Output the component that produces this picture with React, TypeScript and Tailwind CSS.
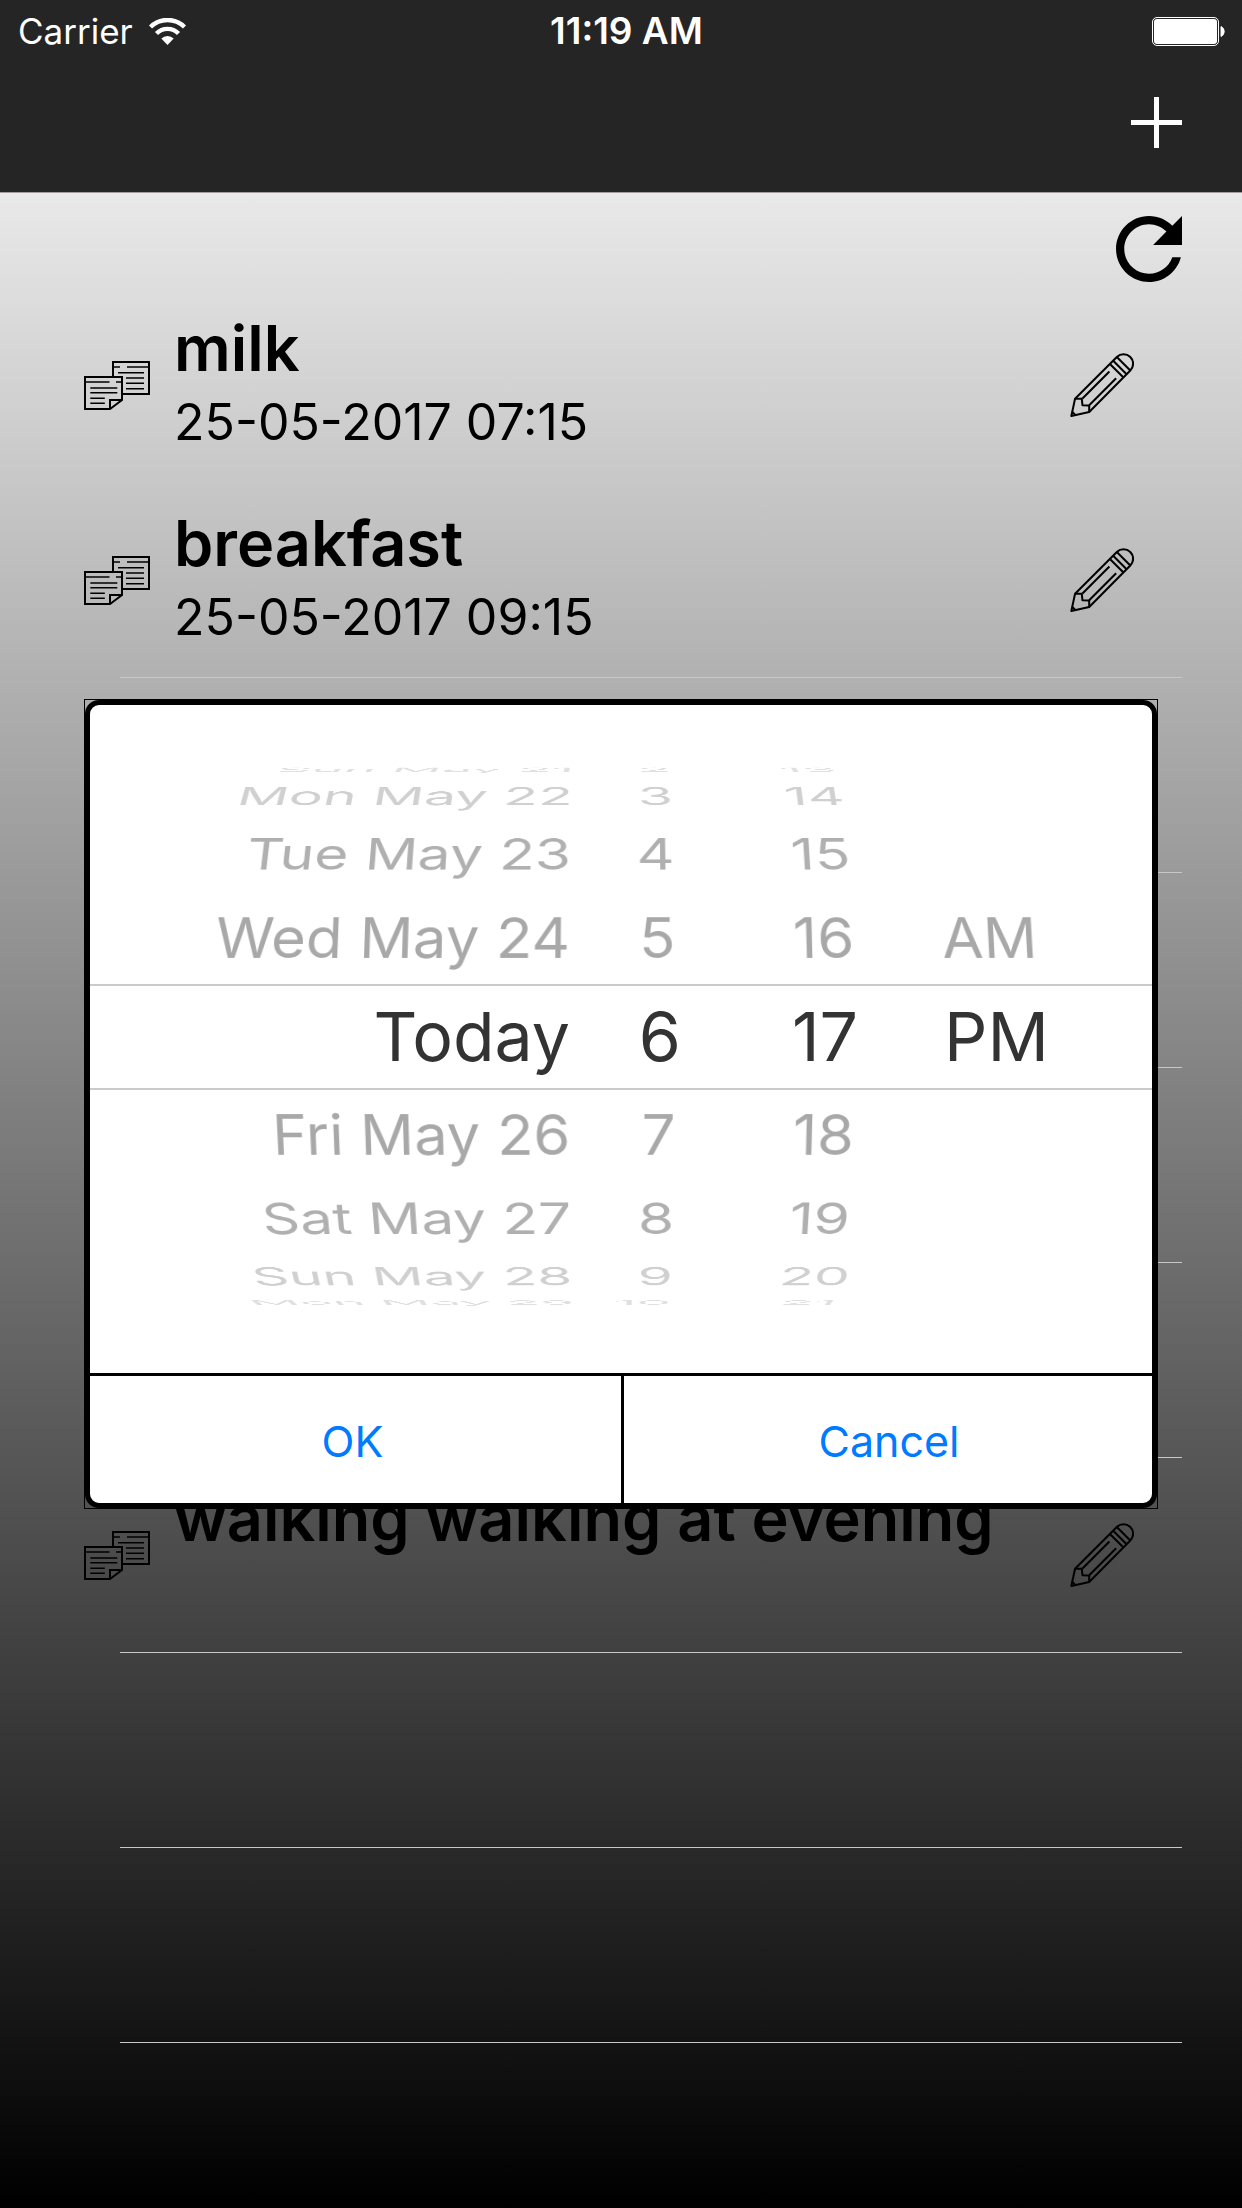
import type { CSSProperties } from "react";

type Reminder = { title: string; date?: string };

const reminders: (Reminder | null)[] = [
  { title: "milk", date: "25-05-2017 07:15" },
  { title: "breakfast", date: "25-05-2017 09:15" },
  null,
  null,
  null,
  null,
  { title: "walking walking at evening" },
  null,
  null,
];

type Wheel = {
  label: string;
  values: string[];
  selected: number;
  list: string;
  item: string;
};

const wheels: Wheel[] = [
  {
    label: "Date",
    values: [
      "Sun May 21",
      "Mon May 22",
      "Tue May 23",
      "Wed May 24",
      "Today",
      "Fri May 26",
      "Sat May 27",
      "Sun May 28",
      "Mon May 29",
    ],
    selected: 4,
    list: "justify-items-end",
    item: "text-right",
  },
  {
    label: "Hour",
    values: ["2", "3", "4", "5", "6", "7", "8", "9", "10"],
    selected: 4,
    list: "justify-items-center",
    item: "w-[2ch] text-right",
  },
  {
    label: "Minute",
    values: ["13", "14", "15", "16", "17", "18", "19", "20", "21"],
    selected: 4,
    list: "justify-items-center",
    item: "text-center",
  },
  {
    label: "AM or PM",
    values: ["AM", "PM"],
    selected: 1,
    list: "justify-items-start",
    item: "text-left",
  },
];

const STEP_DEGREES = 19.5;
const RADIUS = 297;

const depthStyles = [
  "text-[68px] text-[#333333]",
  "text-[60px] text-[#a8a8a8]",
  "text-[60px] text-[#b0b0b0]",
  "text-[60px] text-[#d0d0d0]",
  "text-[60px] text-[#e0e0e0]",
];

/** Places a value on the drum, a number of steps above (negative) or below the middle. */
function onDrum(offset: number): CSSProperties | undefined {
  if (offset === 0) return undefined;
  return {
    transform: `translateZ(${-RADIUS}px) rotateX(${-offset * STEP_DEGREES}deg) translateZ(${RADIUS}px)`,
  };
}

function WifiIcon() {
  return (
    <svg viewBox="0 0 37 27" className="h-[27px] w-[37px]" fill="none" aria-hidden="true">
      <path d="M1.5 9a24 24 0 0 1 34 0" stroke="white" strokeWidth="4.4" />
      <path d="M7.5 15.5a15.5 15.5 0 0 1 22 0" stroke="white" strokeWidth="4.4" />
      <path d="M12.3 20.6a8.8 8.8 0 0 1 12.4 0L18.5 27z" fill="white" />
    </svg>
  );
}

function BatteryIcon() {
  return (
    <svg viewBox="0 0 73 29" className="h-[29px] w-[73px]" aria-label="Battery full" role="img">
      <rect x="0.5" y="0.5" width="66" height="28" rx="4.5" fill="none" stroke="white" />
      <rect x="2" y="2" width="63" height="25" rx="3" fill="white" />
      <path d="M69 9.5a5.5 5.5 0 0 1 0 10z" fill="white" stroke="white" />
    </svg>
  );
}

function NotesIcon() {
  return (
    <svg
      viewBox="0 0 66 49"
      className="h-[49px] w-[66px] shrink-0"
      fill="none"
      stroke="black"
      strokeWidth="2"
      aria-hidden="true"
    >
      <path d="M29 16V1h36v32H39" />
      <path d="M28 6h8M43 6h22M34 11.7h26M42 17h18M42 22.3h18M42 27.7h18" strokeWidth="1.6" />
      <path d="M26 48H1V16h37v23L26 48V39h12" />
      <path
        d="M1 21h24.5M32 21h6M6.3 27h27M6.3 31.7h27M6.3 37.3h14.5M6.3 42.3h14.5"
        strokeWidth="1.6"
      />
    </svg>
  );
}

function PencilIcon() {
  return (
    <svg
      viewBox="93 100 190 190"
      className="h-16 w-16"
      fill="none"
      stroke="black"
      strokeWidth="6"
      strokeLinejoin="round"
      aria-hidden="true"
    >
      <path d="M108 236L232 112A28 28 0 0 1 272 152L150 275L97 287Z" />
      <path d="M108 236h20l2 19 20 1v19M213 134l38 38M222 124l39 39M232 112l40 40" />
      <path d="M130 235l80-80M150 255l80-80M99 274l10 10" />
    </svg>
  );
}

function ReminderRow({ reminder }: { reminder: Reminder | null }) {
  return (
    <li className="flex h-[195px] flex-col">
      <div className="flex min-h-0 flex-1 items-center gap-6 pr-[108px] pl-[84px]">
        {reminder && (
          <>
            <NotesIcon />
            <div className="min-w-0 flex-1 self-start pt-5">
              <h2 className="truncate text-[63px] leading-[80px] font-semibold">{reminder.title}</h2>
              {reminder.date && <p className="text-[50px] leading-[68px]">{reminder.date}</p>}
            </div>
            <button type="button" aria-label={`Edit ${reminder.title}`} className="shrink-0">
              <PencilIcon />
            </button>
          </>
        )}
      </div>
      <div className="mr-[60px] ml-[120px] h-px bg-[#c8c7cc]" />
    </li>
  );
}

function DatePicker() {
  return (
    <div className="grid h-[668px] items-center overflow-hidden pb-1">
      <div className="h-[106px] border-y-2 border-[#cbcbcb] [grid-area:1/1]" />
      <div className="grid grid-cols-[480fr_136fr_238fr_208fr] items-center pb-0.5 [grid-area:1/1] [perspective:2600px]">
        {wheels.map((wheel) => (
          <ul
            key={wheel.label}
            role="listbox"
            aria-label={wheel.label}
            className={`grid items-center [transform-style:preserve-3d] ${wheel.list}`}
          >
            {wheel.values.map((value, index) => {
              const offset = index - wheel.selected;
              return (
                <li
                  key={value}
                  role="option"
                  aria-selected={offset === 0}
                  className={`leading-[84px] whitespace-nowrap [grid-area:1/1] ${wheel.item} ${depthStyles[Math.abs(offset)]}`}
                  style={onDrum(offset)}
                >
                  {value}
                </li>
              );
            })}
          </ul>
        ))}
      </div>
    </div>
  );
}

function DateDialog() {
  return (
    <div className="absolute inset-x-[84px] top-[699px] border border-black">
      <div
        role="dialog"
        aria-label="Choose date and time"
        className="overflow-hidden rounded-[14px] border-5 border-black bg-white"
      >
        <DatePicker />
        <div className="grid h-[130px] grid-cols-2 border-t-3 border-black text-[43px] text-[#007aff]">
          <button type="button" className="pt-1 pr-1.5">
            OK
          </button>
          <button type="button" className="border-l-3 border-black pt-1 pl-0.5">
            Cancel
          </button>
        </div>
      </div>
    </div>
  );
}

export default function App() {
  return (
    <div className="relative min-h-screen overflow-hidden bg-linear-to-b/srgb from-white to-black font-['Inter',sans-serif] text-black">
      <header className="h-48 bg-[#252525] text-white">
        <div className="grid h-[62px] grid-cols-3 items-center pr-[17px] pl-[18px] text-[35px] leading-[62px]">
          <div className="flex items-center gap-4">
            <span>Carrier</span>
            <WifiIcon />
          </div>
          <span className="pl-2.5 text-center text-[37px] font-semibold">11:19 AM</span>
          <div className="flex justify-end">
            <BatteryIcon />
          </div>
        </div>
        <div className="flex h-[130px] items-start justify-end pt-[35px] pr-[60px]">
          <button type="button" aria-label="Add reminder">
            <svg viewBox="0 0 51 51" className="size-[51px]" stroke="white" strokeWidth="5" aria-hidden="true">
              <path d="M25.5 0v51M0 25.5h51" />
            </svg>
          </button>
        </div>
      </header>
      <main>
        <div className="flex h-24 items-start justify-end border-t border-[#a29c9c] pt-[23px] pr-[60px]">
          <button type="button" aria-label="Refresh">
            <svg viewBox="4 4 16 16" className="size-[66px]" aria-hidden="true">
              <path d="M17.65 6.35C16.2 4.9 14.21 4 12 4c-4.42 0-7.99 3.58-7.99 8s3.57 8 7.99 8c3.73 0 6.84-2.55 7.73-6h-2.08c-.82 2.33-3.04 4-5.65 4-3.31 0-6-2.69-6-6s2.69-6 6-6c1.66 0 3.14.69 4.22 1.78L13 11h7V4l-2.35 2.35z" />
            </svg>
          </button>
        </div>
        <ul>
          {reminders.map((reminder, index) => (
            <ReminderRow key={index} reminder={reminder} />
          ))}
        </ul>
      </main>
      <DateDialog />
    </div>
  );
}
